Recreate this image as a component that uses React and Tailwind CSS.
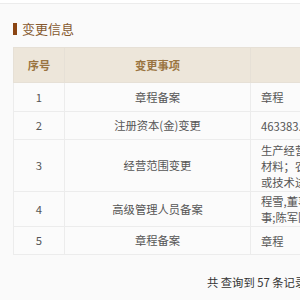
import React from "react";

const rows = [
  { no: "1", item: "章程备案", after: ["章程"], h: "h-[29px]" },
  { no: "2", item: "注册资本(金)变更", after: ["463383.8767万人民币"], h: "h-[28px]" },
  {
    no: "3",
    item: "经营范围变更",
    after: ["生产经营玻璃纤维及制品、复合", "材料；农用薄膜、塑料制品生产", "或技术进出口业务。"],
    h: "h-[52px]",
  },
  { no: "4", item: "高级管理人员备案", after: ["程雪,董事长;张伟,董", "事;陈军阳,监事"], h: "h-[34px]" },
  { no: "5", item: "章程备案", after: ["章程"], h: "h-[28px]" },
];

export default function App() {
  return (
    <div
      className="w-[300px] h-[300px] overflow-hidden bg-[#fafafa]"
      style={{ fontFamily: '"Noto Sans CJK SC", "Noto Sans", sans-serif' }}
    >
      <div className="h-[4px] bg-white border-b border-[#ececec]"></div>
      <div className="pl-[13px] w-[600px]">
        <div className="flex items-center h-[43px] pt-[6px]">
          <span className="w-[4px] h-[12px] bg-[#8b4513] mr-[5px]"></span>
          <span className="text-[13px] leading-none text-[#86592f]">变更信息</span>
        </div>
        <table className="border-collapse text-[11.3px] text-[#555]">
          <thead>
            <tr className="h-[35px] bg-[#ede6da] text-[#9a7440] font-bold">
              <th className="w-[51px] border border-[#e6e0d6] font-bold">序号</th>
              <th className="w-[186px] border border-[#e6e0d6] font-bold">变更事项</th>
              <th className="w-[300px] border border-[#e6e0d6] font-bold"></th>
            </tr>
          </thead>
          <tbody>
            {rows.map((r) => (
              <tr key={r.no} className={`${r.h} bg-[#fbfbfb]`}>
                <td className="border border-[#ececec] text-center">{r.no}</td>
                <td className="border border-[#ececec] text-center">{r.item}</td>
                <td className="border border-[#ececec] pl-[10px] py-[1px] leading-[16px] whitespace-nowrap">
                  {r.after.map((l, i) => (
                    <div key={i}>{l}</div>
                  ))}
                </td>
              </tr>
            ))}
          </tbody>
        </table>
        <div className="pl-[194px] pt-[19px] text-[11.3px] text-[#333] whitespace-nowrap">
          共 查询到 57 条记录 共 12 页
        </div>
      </div>
    </div>
  );
}
